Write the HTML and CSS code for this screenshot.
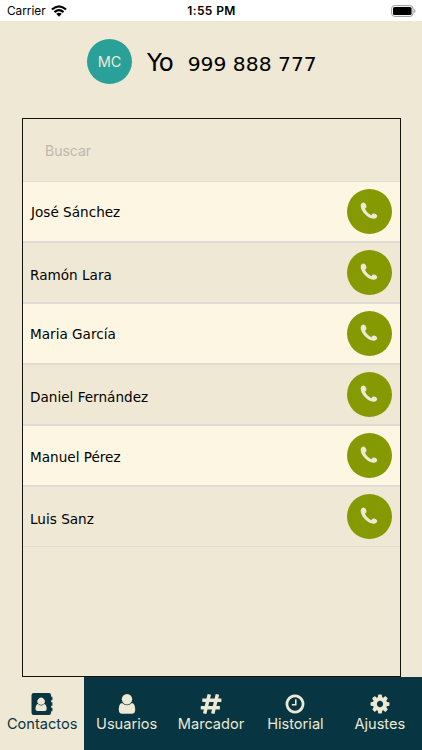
FILE: index.html
```html
<!DOCTYPE html>
<html lang="es">
<head>
	<meta charset="utf-8">
	<title>Contactos</title>
	<link rel="stylesheet" href="styles.css">
</head>
<body>
	<svg class="defs">
		<symbol id="phone" viewBox="0 0 18 18">
			<path d="M.7 3.2C.5 6 2.1 9.4 5 12.3S11.8 17.5 15 16.5C16.8 16 17.5 14.6 17 13.3C16.3 11.8 13.9 10.8 12.3 11.9L11.4 13.2C9 12.5 5.6 9 5.1 6.6L6.3 5.4C7 3.8 5.8 1.2 4.1 .7C2.6 .3 1 1.5 .7 3.2Z"/>
		</symbol>
	</svg>

	<div class="status">
		<div class="carrier">
			<span>Carrier</span>
			<svg class="wifi" viewBox="0 0 16 12">
				<path d="M.9 4.5Q8-1.9 15.1 4.5M3.5 7.1Q8 3.1 12.5 7.1" fill="none" stroke="#000" stroke-width="2.2"/>
				<path d="M5.2 8.8Q8 6.5 10.8 8.8L8 11.7Z"/>
			</svg>
		</div>
		<div class="time">1:55 PM</div>
		<div class="power">
			<svg class="battery" viewBox="0 0 25 12">
				<rect x=".6" y=".6" width="21.4" height="10.8" rx="3" fill="none" stroke="#999"/>
				<rect x="2" y="2" width="18.6" height="8" rx="1.6"/>
				<path d="M23.2 4v4q1.3-.5 1.3-2t-1.3-2z" fill="#999"/>
			</svg>
		</div>
	</div>

	<div class="me">
		<div class="avatar">MC</div>
		<span class="name">Yo</span>
		<span class="number">999 888 777</span>
	</div>

	<div class="contacts">
		<input class="search" type="text" placeholder="Buscar">
		<div class="row light"><span class="jose">José Sánchez</span><a class="call"><svg><use href="#phone"/></svg></a></div>
		<div class="row low"><span>Ramón Lara</span><a class="call"><svg><use href="#phone"/></svg></a></div>
		<div class="row light"><span>Maria García</span><a class="call"><svg><use href="#phone"/></svg></a></div>
		<div class="row low"><span>Daniel Fernández</span><a class="call"><svg><use href="#phone"/></svg></a></div>
		<div class="row light mid"><span>Manuel Pérez</span><a class="call"><svg><use href="#phone"/></svg></a></div>
		<div class="row low"><span>Luis Sanz</span><a class="call"><svg><use href="#phone"/></svg></a></div>
	</div>

	<div class="tabs">
		<a class="tab active">
			<svg viewBox="0 0 22 22">
				<path fill-rule="evenodd" d="M2.7 0H17.9Q20.1 0 20.1 2.2V3.8H21.4V7.2H20.1V9.3H21.4V12.7H20.1V14.8H21.4V18.2H20.1V19.8Q20.1 22 17.9 22H2.7Q.5 22 .5 19.8V2.2Q.5 0 2.7 0ZM7.2 10.8C5.1 11.3 4.5 13.6 4.5 16Q4.5 17.9 6.5 17.9H13.7Q15.7 17.9 15.7 16C15.7 13.6 15.1 11.3 13 10.8A3.7 3.7 0 1 0 7.2 10.8Z"/>
				<path d="M7.4 11.2Q10.1 13.5 12.8 11.2" fill="none" stroke="#073642" stroke-width=".7"/>
			</svg>
			<span>Contactos</span>
		</a>
		<a class="tab">
			<svg viewBox="0 0 22 22">
				<circle cx="11" cy="6.3" r="5.2"/>
				<path d="M6.1 9.9C3.6 10.3 2.8 13.3 2.8 16.8Q2.8 20.7 6.2 20.7H15.8Q19.2 20.7 19.2 16.8C19.2 13.3 18.4 10.3 15.9 9.9Q11 14.5 6.1 9.9Z"/>
			</svg>
			<span>Usuarios</span>
		</a>
		<a class="tab">
			<svg viewBox="0 0 22 22">
				<path d="M9.3 1.4L4.7 20.6M17.4 1.4L12.8 20.6M2.3 7.3H21.4M.8 14.8H19.9" fill="none" stroke="#eee8d5" stroke-width="3.5"/>
			</svg>
			<span>Marcador</span>
		</a>
		<a class="tab">
			<svg viewBox="0 0 1792 1792">
				<path d="M1024 544v448q0 14-9 23t-23 9h-320q-14 0-23-9t-9-23v-64q0-14 9-23t23-9h224v-352q0-14 9-23t23-9h64q14 0 23 9t9 23zm416 352q0-148-73-273t-198-198-273-73-273 73-198 198-73 273 73 273 198 198 273 73 273-73 198-198 73-273zm224 0q0 209-103 385.5t-279.5 279.5-385.5 103-385.5-103-279.5-279.5-103-385.5 103-385.5 279.5-279.5 385.5-103 385.5 103 279.5 279.5 103 385.5z"/>
			</svg>
			<span>Historial</span>
		</a>
		<a class="tab">
			<svg viewBox="0 0 1792 1792">
				<path d="M1152 896q0-106-75-181t-181-75-181 75-75 181 75 181 181 75 181-75 75-181zm512-109v222q0 12-8 23t-20 13l-185 28q-19 54-39 91 35 50 107 138 10 12 10 25t-9 23q-27 37-99 108t-94 71q-12 0-26-9l-138-108q-44 23-91 38-16 136-29 186-7 28-36 28h-222q-14 0-24.5-8.5t-11.5-21.5l-28-184q-49-16-90-37l-141 107q-10 9-25 9-14 0-25-11-126-114-165-168-7-10-7-23 0-12 8-23 15-21 51-66.5t54-70.5q-27-50-41-99l-183-27q-13-2-21-12.5t-8-23.5v-222q0-12 8-23t19-13l186-28q14-46 39-92-40-57-107-138-10-12-10-24 0-10 9-23 26-36 98.5-107.5t94.5-71.5q13 0 26 10l138 107q44-23 91-38 16-136 29-186 7-28 36-28h222q14 0 24.5 8.5t11.5 21.5l28 184q49 16 90 37l142-107q9-9 24-9 13 0 25 10 129 119 165 170 7 8 7 22 0 12-8 23-15 21-51 66.5t-54 70.5q26 50 41 98l183 28q13 2 21 12.5t8 23.5z"/>
			</svg>
			<span>Ajustes</span>
		</a>
	</div>
</body>
</html>
```
FILE: styles.css
```css
* {
	box-sizing: border-box;
}
body {
	margin: 0;
	height: 750px;
	display: flex;
	flex-direction: column;
	overflow: hidden;
	background: #eee8d5;
	font-family: "Inter", sans-serif;
}
.defs {
	display: none;
}

/* status bar */
.status {
	height: 21px;
	flex: none;
	display: grid;
	grid-template-columns: 1fr auto 1fr;
	align-items: center;
	padding: 0 6px 0 7px;
	background: #fff;
	font-size: 12px;
	line-height: 22px;
}
.carrier {
	display: flex;
	align-items: center;
	gap: 5px;
	font-size: 11.8px;
}
.wifi {
	width: 16px;
	height: 12px;
}
.time {
	font-weight: 600;
	letter-spacing: 0.35px;
}
.power {
	display: flex;
	justify-content: flex-end;
}
.battery {
	width: 25px;
	height: 12px;
}

/* own number */
.me {
	height: 97px;
	flex: none;
	display: flex;
	align-items: flex-start;
	padding: 18px 0 0 87px;
	font-family: "DejaVu Sans", sans-serif;
}
.avatar {
	width: 45px;
	height: 45px;
	border-radius: 50%;
	background: #2aa198;
	color: #eee8d5;
	font: 14.5px/46px "Inter", sans-serif;
	text-align: center;
}
.name {
	margin-left: 15px;
	font-size: 24.5px;
	line-height: 47px;
}
.number {
	margin-left: 14px;
	font-size: 20.3px;
	line-height: 50px;
}

/* contact list */
.contacts {
	flex: 1;
	margin: 0 21px 0 22px;
	border: 1.5px solid #15130f;
}
.search {
	display: block;
	width: 100%;
	height: 63px;
	padding: 0 22px;
	border: 0;
	border-bottom: 1px solid #e2dfd6;
	background: none;
	font: 14px "Inter", sans-serif;
}
.search::placeholder {
	color: #bdb8aa;
}
.row {
	height: 61px;
	display: flex;
	align-items: center;
	justify-content: space-between;
	padding: 0 8px 0 7px;
	border-bottom: 2px solid #dfdcd6;
	font: 13.6px "DejaVu Sans", sans-serif;
}
.row:last-child {
	height: 60px;
	border-bottom-width: 1px;
}
.light {
	background: #fdf6e3;
}
.low span {
	padding-top: 5px;
}
.mid span {
	padding-top: 3px;
}
.jose {
	padding-left: 1px;
}
.call {
	width: 45px;
	height: 45px;
	display: flex;
	align-items: center;
	justify-content: center;
	border-radius: 50%;
	background: #859900;
}
.call svg {
	width: 18px;
	height: 18px;
	margin: 0 2px 2px 0;
	fill: #eee8d5;
}

/* bottom tabs */
.tabs {
	height: 73px;
	flex: none;
	display: grid;
	grid-template-columns: repeat(5, 1fr);
	background: #073642;
}
.tab {
	display: flex;
	flex-direction: column;
	align-items: center;
	padding-top: 16px;
	color: #eee8d5;
	fill: #eee8d5;
	font-size: 14.6px;
	line-height: 19px;
}
.tab svg {
	width: 22px;
	height: 22px;
	overflow: visible;
}
.active {
	background: #eee8d5;
	color: #073642;
	fill: #073642;
}
```
